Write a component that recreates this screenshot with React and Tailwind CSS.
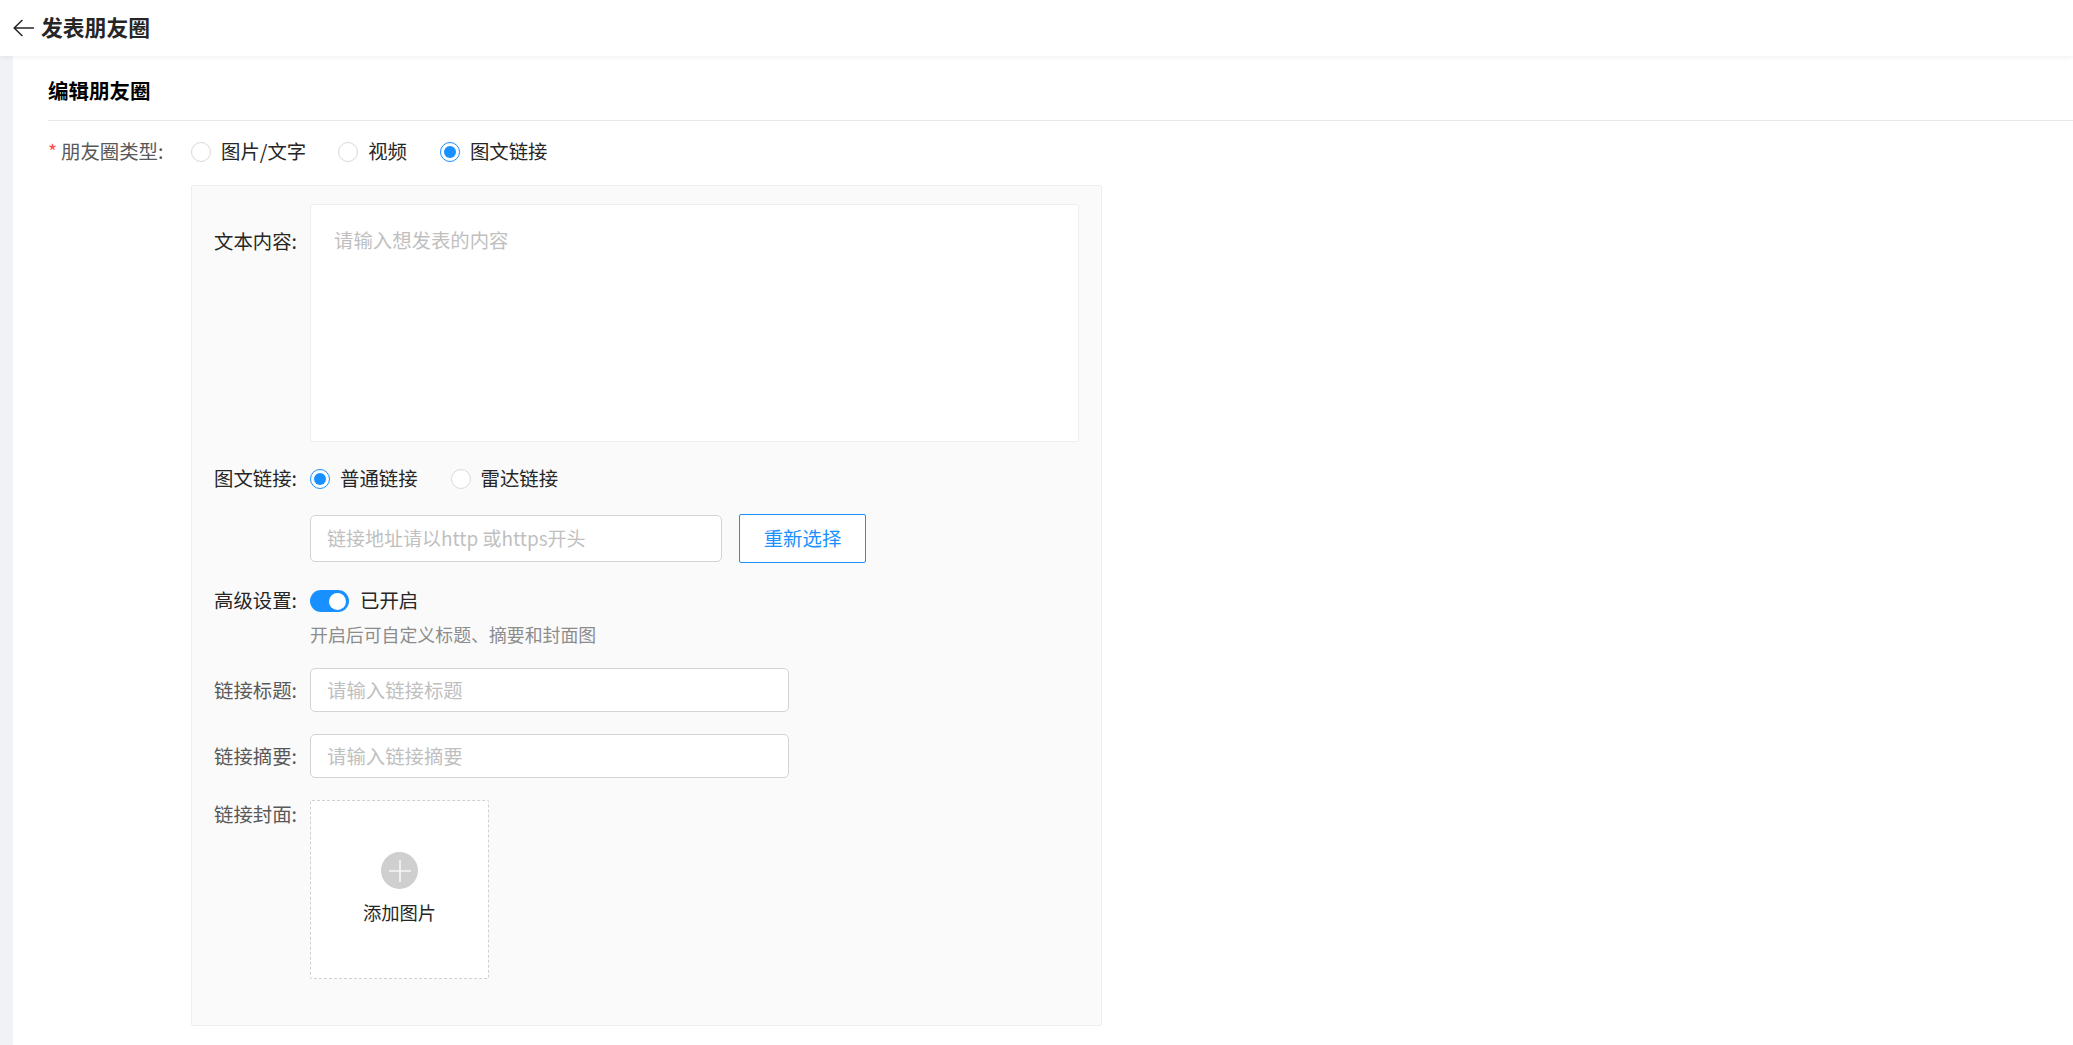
import { Plus } from 'lucide-react';

const font = { fontFamily: '"Noto Sans CJK SC", "Noto Sans", sans-serif' };

function Radio({ label, checked, className = '' }) {
  return (
    <label className={`flex items-center ${className}`}>
      <span className={`w-[20px] h-[20px] rounded-full border bg-white flex items-center justify-center shrink-0 ${checked ? 'border-[#1890ff]' : 'border-[#d9d9d9]'}`}>
        {checked && <span className="w-[12px] h-[12px] rounded-full bg-[#1890ff]" />}
      </span>
      <span className="ml-[10px] leading-[26px] pb-[2px] text-[#262626]">{label}</span>
    </label>
  );
}

function Row({ label, muted, labelClass = '', className = '', children }) {
  return (
    <div className={`flex ${className}`}>
      <div className={`w-[96px] shrink-0 h-[28px] ${muted ? 'leading-[27px] text-[#595959]' : 'leading-[25px] text-[#262626]'} ${labelClass}`}>{label}:</div>
      {children}
    </div>
  );
}

function TextInput({ placeholder, className = '' }) {
  return (
    <input
      placeholder={placeholder}
      className={`block bg-white border border-[#d4d4d4] rounded-[5px] px-[16px] pb-[2px] outline-none placeholder:text-[#bfbfbf] ${className}`}
    />
  );
}

export default function App() {
  return (
    <div className="min-h-screen flex flex-col bg-white text-[19.4px] leading-[28px]" style={font}>
      <header className="relative z-10 h-[56px] shrink-0 bg-white flex items-center pl-[13px] shadow-[0_1px_5px_rgba(0,0,0,0.07)]">
        <svg width="21" height="18" viewBox="0 0 21 18" fill="none" stroke="#262626" strokeWidth="1.5" className="shrink-0">
          <path d="M21 9H1.2M9.4 1 1.2 9l8.2 8" />
        </svg>
        <h1 className="ml-[7px] pb-[2px] text-[21.8px] font-bold text-[#262626]">发表朋友圈</h1>
      </header>

      <div className="flex flex-1">
        <aside className="w-[13px] shrink-0 bg-[#f0f2f5]" />
        <main className="flex-1 pl-[35px]">
          <div className="h-[65px] pt-[20px] border-b border-[#e8e8e8] text-[20.5px] font-bold text-[#000000]">编辑朋友圈</div>

          <div className="h-[61px] mb-[3px] flex items-center">
            <div className="w-[143px] shrink-0 pb-[1px] text-[#595959]">
              <span className="text-[#ff4d4f] mr-[4px]">*</span>朋友圈类型:
            </div>
            <Radio label="图片/文字" />
            <Radio label="视频" className="ml-[32px]" />
            <Radio label="图文链接" checked className="ml-[33px]" />
          </div>

          <section className="ml-[143px] w-[911px] h-[841px] bg-[#fafafa] border border-[#eeeeee] rounded-[2px] pl-[22px] pt-[18px]">
            <Row label="文本内容" labelClass="mt-[24px]">
              <textarea
                placeholder="请输入想发表的内容"
                className="block w-[769px] h-[238px] bg-white border border-[#eeeeee] rounded-[2px] pl-[23px] pt-[21px] resize-none outline-none placeholder:text-[#bfbfbf]"
              />
            </Row>

            <Row label="图文链接" className="mt-[23px] items-center">
              <Radio label="普通链接" checked />
              <Radio label="雷达链接" className="ml-[33px]" />
            </Row>

            <div className="mt-[21px] ml-[96px] flex items-center">
              <TextInput placeholder="链接地址请以http 或https开头" className="w-[412px] h-[47px] text-[19px]" />
              <button className="ml-[17px] w-[127px] h-[49px] pb-[2px] border border-[#1890ff] rounded-[2px] bg-white text-[#1890ff]">重新选择</button>
            </div>

            <Row label="高级设置" className="mt-[24px] items-center">
              <span className="w-[39px] h-[22px] rounded-full bg-[#1890ff] flex items-center justify-end pr-[3px]">
                <span className="w-[17px] h-[17px] rounded-full bg-white" />
              </span>
              <span className="ml-[11px] leading-[26px] pb-[2px] text-[#262626]">已开启</span>
            </Row>
            <p className="mt-[5px] mb-[1px] ml-[96px] text-[17.9px] text-[#8c8c8c]">开启后可自定义标题、摘要和封面图</p>

            <Row label="链接标题" muted className="mt-[20px] items-center">
              <TextInput placeholder="请输入链接标题" className="w-[479px] h-[44px]" />
            </Row>
            <Row label="链接摘要" muted className="mt-[22px] items-center">
              <TextInput placeholder="请输入链接摘要" className="w-[479px] h-[44px]" />
            </Row>

            <Row label="链接封面" muted className="mt-[22px]">
              <div className="w-[179px] h-[179px] bg-white border border-dashed border-[#d0d0d0] rounded-[2px] flex flex-col items-center pt-[51px]">
                <span className="w-[37px] h-[37px] rounded-full bg-[#cfcfcf] flex items-center justify-center">
                  <Plus size={36} strokeWidth={1.1} color="#f7f7f7" />
                </span>
                <span className="mt-[9px] text-[18.3px] text-[#262626]">添加图片</span>
              </div>
            </Row>
          </section>
        </main>
      </div>
    </div>
  );
}
